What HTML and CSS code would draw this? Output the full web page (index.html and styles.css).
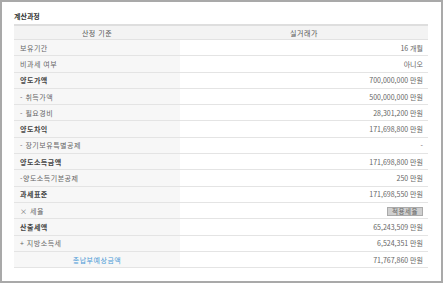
FILE: index.html
```html
<!DOCTYPE html>
<html lang="ko">
<head>
<meta charset="utf-8">
<link rel="stylesheet" href="styles.css">
</head>
<body>
<div class="frame">
  <div class="title">계산과정</div>
  <table class="calc">
    <thead>
      <tr><th class="lab">산정 기준</th><th class="val">실거래가</th></tr>
    </thead>
    <tbody>
      <tr><td class="lab">보유기간</td><td class="val">16 개월</td></tr>
      <tr><td class="lab">비과세 여부</td><td class="val">아니오</td></tr>
      <tr class="strong"><td class="lab">양도가액</td><td class="val">700,000,000 만원</td></tr>
      <tr><td class="lab">- 취득가액</td><td class="val">500,000,000 만원</td></tr>
      <tr><td class="lab">- 필요경비</td><td class="val">28,301,200 만원</td></tr>
      <tr class="strong"><td class="lab">양도차익</td><td class="val">171,698,800 만원</td></tr>
      <tr><td class="lab">- 장기보유특별공제</td><td class="val">-</td></tr>
      <tr class="strong"><td class="lab">양도소득금액</td><td class="val">171,698,800 만원</td></tr>
      <tr><td class="lab">-양도소득기본공제</td><td class="val">250 만원</td></tr>
      <tr class="strong"><td class="lab">과세표준</td><td class="val">171,698,550 만원</td></tr>
      <tr><td class="lab">× 세율</td><td class="val"><span class="btn">적용세율</span></td></tr>
      <tr class="strong"><td class="lab">산출세액</td><td class="val">65,243,509 만원</td></tr>
      <tr><td class="lab">+ 지방소득세</td><td class="val">6,524,351 만원</td></tr>
      <tr class="total"><td class="lab">총납부예상금액</td><td class="val">71,767,860 만원</td></tr>
    </tbody>
  </table>
</div>
</body>
</html>
```
FILE: styles.css
```css
html, body {
  margin: 0;
  padding: 0;
  background: #fff;
}
body {
  font-family: "Noto Sans CJK KR", "Noto Sans", sans-serif;
  color: #666;
}
.frame {
  box-sizing: border-box;
  width: 443px;
  height: 283px;
  border: 2px solid #a9a9a9;
  padding: 9px 13px 0 12px;
}
.title {
  font-size: 7px;
  font-weight: bold;
  color: #333;
  line-height: 10px;
  height: 13px;
}
.calc {
  width: 414px;
  border-collapse: collapse;
  border-top: 2px solid #dedede;
  font-size: 7px;
}
.calc th {
  background: #f3f3f3;
  font-weight: normal;
  color: #555;
  height: 13px;
  padding: 0;
  text-align: center;
  border-bottom: 1px solid #e2e2e2;
  letter-spacing: 0.5px;
}
.calc th.lab { width: 166px; }
.calc td {
  height: 15.3px;
  padding: 0;
  border-bottom: 1px solid #e4e4e4;
}
.calc td.lab {
  width: 166px;
  background: #f7f7f7;
  padding-left: 6px;
  box-sizing: border-box;
  letter-spacing: 0.5px;
}
.calc td.val {
  text-align: right;
  padding-right: 5px;
}
.calc tr.strong td.lab {
  font-weight: bold;
  color: #444;
}
.calc tr.total td.lab {
  text-align: center;
  color: #4a9ad6;
  padding-left: 0;
}
.btn {
  display: inline-block;
  background: #cfcfcf;
  border: 1px solid #aaa;
  color: #666;
  font-size: 6.5px;
  line-height: 7px;
  padding: 0 4px;
  letter-spacing: 0.5px;
  vertical-align: middle;
}
```
